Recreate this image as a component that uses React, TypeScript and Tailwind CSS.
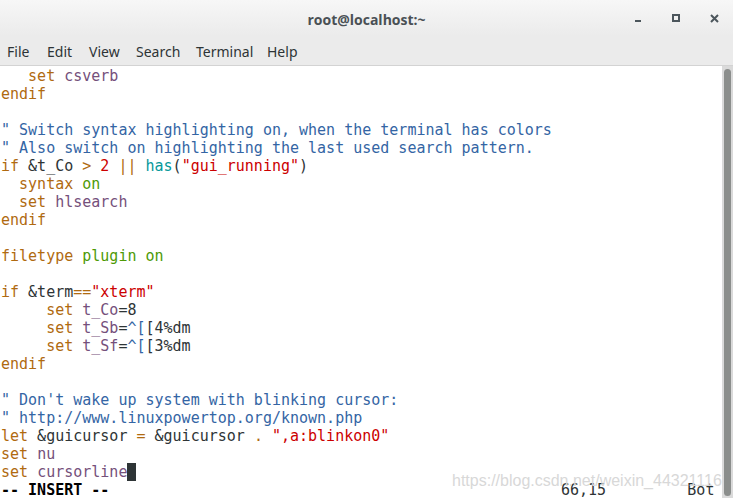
const K = "text-[#b06a10]"; // keyword brown
const O = "text-[#75507b]"; // option purple
const C = "text-[#3465a4]"; // comment blue
const S = "text-[#cc0000]"; // string red
const G = "text-[#4e9a06]"; // green
const T = "text-[#06989a]"; // teal
const D = "text-[#2e3436]"; // default

type Tok = [string, string];

const lines: Tok[][] = [
  [["   ", D], ["set", K], [" ", D], ["csverb", O]],
  [["endif", K]],
  [],
  [['" Switch syntax highlighting on, when the terminal has colors', C]],
  [['" Also switch on highlighting the last used search pattern.', C]],
  [
    ["if", K], [" &t_Co ", D], [">", K], [" ", D], ["2", S], [" ", D], ["||", K], [" ", D],
    ["has", T], ["(", D], ['"gui_running"', S], [")", D],
  ],
  [["  ", D], ["syntax", K], [" ", D], ["on", G]],
  [["  ", D], ["set", K], [" ", D], ["hlsearch", O]],
  [["endif", K]],
  [],
  [["filetype", K], [" ", D], ["plugin on", G]],
  [],
  [["if", K], [" &term", D], ["==", K], ['"xterm"', S]],
  [["     ", D], ["set", K], [" ", D], ["t_Co", O], ["=8", D]],
  [["     ", D], ["set", K], [" ", D], ["t_Sb", O], ["=", D], ["^[", C], ["[4%dm", D]],
  [["     ", D], ["set", K], [" ", D], ["t_Sf", O], ["=", D], ["^[", C], ["[3%dm", D]],
  [["endif", K]],
  [],
  [['" Don\'t wake up system with blinking cursor:', C]],
  [['" http://www.linuxpowertop.org/known.php', C]],
  [
    ["let", K], [" &guicursor ", D], ["=", K], [" &guicursor ", D], [".", K], [" ", D],
    ['",a:blinkon0"', S],
  ],
  [["set", K], [" ", D], ["nu", O]],
  [["set", K], [" ", D], ["cursorline", O]],
];

export default function App() {
  return (
    <div className="w-[733px] h-[498px] overflow-hidden bg-white flex flex-col relative">
      {/* title bar */}
      <div className="h-[36px] shrink-0 bg-gradient-to-b from-[#f7f7f7] to-[#ebebeb] flex items-center relative">
        <div className="flex-1 text-center text-[14px] font-bold text-[#4a5055] pt-[2px] font-['Open_Sans',sans-serif]">
          root@localhost:~
        </div>
        <div className="absolute right-0 top-0 h-full flex items-center">
          <div className="w-[38px] flex justify-center">
            <div className="w-[6px] h-[2px] bg-[#4c565c] mt-[6px]" />
          </div>
          <div className="w-[38px] flex justify-center">
            <div className="w-[8px] h-[8px] border-2 border-[#4c565c]" />
          </div>
          <div className="w-[38px] flex justify-center text-[#4c565c]">
            <svg width="9" height="9" viewBox="0 0 9 9">
              <path d="M1 1L8 8M8 1L1 8" stroke="currentColor" strokeWidth="2" />
            </svg>
          </div>
        </div>
      </div>
      {/* menu bar */}
      <div className="h-[30px] shrink-0 bg-[#ebebeb] border-b border-[#d3d3d3] flex items-center text-[14px] text-[#2e3436] font-['Noto_Sans',sans-serif] pl-[7px] pt-[2px]">
        <span className="w-[40px]">File</span>
        <span className="w-[42px]">Edit</span>
        <span className="w-[47px]">View</span>
        <span className="w-[60px]">Search</span>
        <span className="w-[71px]">Terminal</span>
        <span>Help</span>
      </div>
      {/* terminal */}
      <div className="flex-1 flex min-h-0">
        <div className="flex-1 pt-[1px] pl-[1px] font-['DejaVu_Sans_Mono',monospace] text-[15px] leading-[18px] whitespace-pre">
          {lines.map((l, i) => (
            <div key={i} className="h-[18px] flex">
              {l.map(([t, c], j) => (
                <span key={j} className={c}>
                  {t}
                </span>
              ))}
              {i === lines.length - 1 && <span className="bg-[#2e3436] w-[9px] h-[18px]" />}
            </div>
          ))}
          <div className="h-[18px] text-black">
            <span className="font-bold">-- INSERT --</span>
            <span className="text-[#2e3436]">
              {"                                                  66,15         Bot"}
            </span>
          </div>
        </div>
        <div className="w-[11px] shrink-0 bg-[#dadada] flex justify-center pt-[3px] pb-[2px]">
          <div className="w-[7px] h-full rounded-full bg-[#8b8e8c]" />
        </div>
      </div>
      <div className="absolute left-[452px] top-[469px] text-[16px] text-[#d8d8d8] font-['Liberation_Sans',sans-serif] pointer-events-none">
        https://blog.csdn.net/weixin_44321116
      </div>
    </div>
  );
}
